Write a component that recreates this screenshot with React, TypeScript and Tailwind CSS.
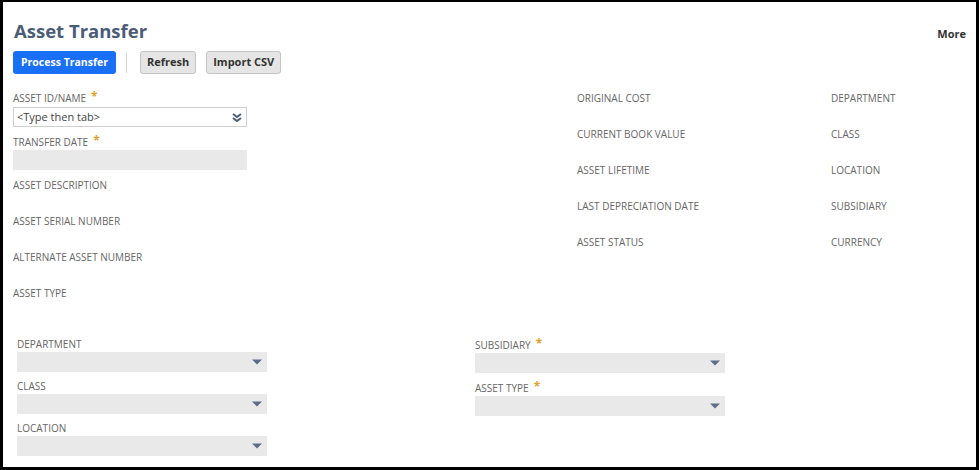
import React from "react";

const font = { fontFamily: '"Open Sans", "Liberation Sans", sans-serif' };

function Req() {
  return <span className="ml-[5px] relative -top-[1px] text-[12px] font-bold text-[#e2a12d]">*</span>;
}

function Label({ text, required }: { text: string; required?: boolean }) {
  return (
    <div className="h-[16px] text-[10px] leading-[16px] uppercase text-[#666666] whitespace-nowrap">
      {text}
      {required && <Req />}
    </div>
  );
}

function Caret() {
  return (
    <svg width="10" height="6" viewBox="0 0 10 6" className="fill-[#5b6d8a]">
      <path d="M0 0.5h10L5 5.5z" />
    </svg>
  );
}

function Select({ label, required, className }: { label: string; required?: boolean; className?: string }) {
  return (
    <div className={className}>
      <Label text={label} required={required} />
      <div className="flex h-[20px] w-[250px] items-center justify-end bg-[#e9e9e9] pr-[5px]">
        <Caret />
      </div>
    </div>
  );
}

const midFields = ["Original Cost", "Current Book Value", "Asset Lifetime", "Last Depreciation Date", "Asset Status"];
const rightFields = ["Department", "Class", "Location", "Subsidiary", "Currency"];

export default function App() {
  return (
    <div
      style={font}
      className="h-[470px] w-[979px] overflow-hidden border-t-2 border-l-[3px] border-r-[3px] border-b-[3px] border-black bg-white"
    >
      {/* header */}
      <div className="flex items-start justify-between pl-[11px] pr-[10px] pt-[17px]">
        <h1 className="text-[18.5px] font-bold leading-[24px] text-[#4b5c77]">Asset Transfer</h1>
        <button className="mt-[7px] text-[11px] font-bold leading-[16px] text-[#333]">More</button>
      </div>

      {/* actions */}
      <div className="mt-[8px] flex items-center pl-[10px]">
        <button className="h-[23px] rounded-[3px] bg-[#1a6ff7] px-[8px] text-[10.5px] font-bold text-white">
          Process Transfer
        </button>
        <span className="ml-[10px] mr-[13px] h-[20px] w-px bg-[#d6d6d6]" />
        <button className="h-[23px] rounded-[3px] border border-[#c4c4c4] bg-[#e5e5e5] px-[6px] text-[11px] font-bold text-[#333]">
          Refresh
        </button>
        <button className="ml-[10px] h-[23px] rounded-[3px] border border-[#c4c4c4] bg-[#e5e5e5] px-[6px] text-[11px] font-bold text-[#333]">
          Import CSV
        </button>
      </div>

      {/* main fields */}
      <div className="mt-[16px] flex pl-[10px]">
        <div className="w-[234px]">
          <Label text="Asset ID/Name" required />
          <div className="mt-px flex h-[20px] items-center justify-between border border-[#cfcfcf] bg-white pl-[3px] pr-[4px]">
            <span className="text-[11px] text-[#444]">&lt;Type then tab&gt;</span>
            <svg width="10" height="9" viewBox="0 0 10 9" fill="none" stroke="#4b5c77" strokeWidth="2">
              <path d="M1 1l4 3 4-3M1 5l4 3 4-3" />
            </svg>
          </div>
          <div className="mt-[7px]">
            <Label text="Transfer Date" required />
          </div>
          <div className="h-[20px] bg-[#e9e9e9]" />
          <div className="mt-[7px] flex flex-col">
            {["Asset Description", "Asset Serial Number", "Alternate Asset Number", "Asset Type"].map((t) => (
              <div key={t} className="h-[36px]">
                <Label text={t} />
              </div>
            ))}
          </div>
        </div>

        <div className="ml-[330px] w-[254px]">
          {midFields.map((t) => (
            <div key={t} className="h-[36px]">
              <Label text={t} />
            </div>
          ))}
        </div>

        <div>
          {rightFields.map((t) => (
            <div key={t} className="h-[36px]">
              <Label text={t} />
            </div>
          ))}
        </div>
      </div>

      {/* classification */}
      <div className="mt-[15px] flex pl-[14px]">
        <div className="flex w-[458px] flex-col gap-[6px]">
          <Select label="Department" />
          <Select label="Class" />
          <Select label="Location" />
        </div>
        <div className="mt-[1px] flex flex-col gap-[7px]">
          <Select label="Subsidiary" required />
          <Select label="Asset Type" required />
        </div>
      </div>
    </div>
  );
}
